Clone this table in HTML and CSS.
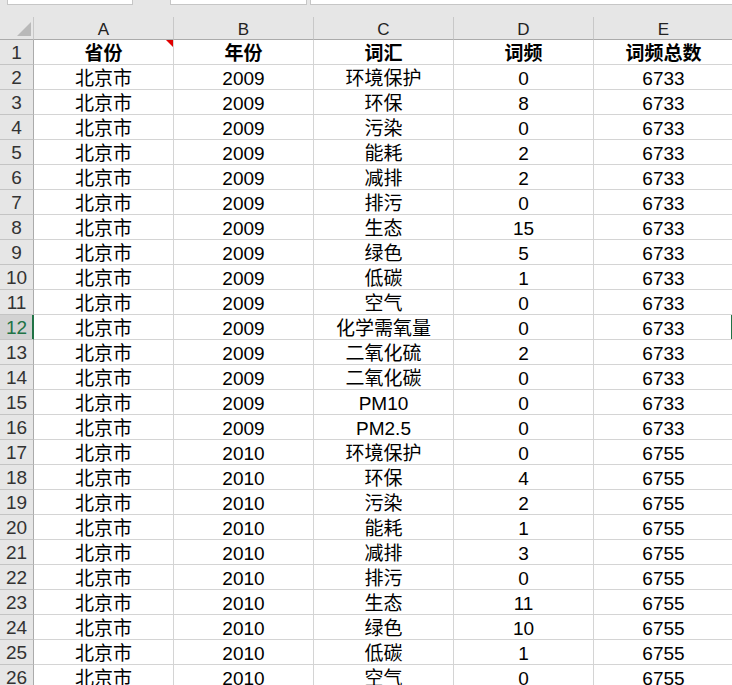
FILE: index.html
```html
<!DOCTYPE html>
<html>
<head>
<meta charset="utf-8">
<link rel="stylesheet" href="styles.css">
</head>
<body>
<div class="topbar">
  <div class="box box1"></div>
  <div class="box box2"></div>
  <div class="box box3"></div>
</div>
<div class="sheet" id="sheet">
  <div class="corner"><span class="tri"></span></div>
  <div class="colh">A</div>
  <div class="colh">B</div>
  <div class="colh">C</div>
  <div class="colh">D</div>
  <div class="colh">E</div>

  <div class="rowh">1</div>
  <div class="cell bold comment">省份</div>
  <div class="cell bold">年份</div>
  <div class="cell bold">词汇</div>
  <div class="cell bold">词频</div>
  <div class="cell bold">词频总数</div>

  <div class="rowh">2</div><div class="cell">北京市</div><div class="cell">2009</div><div class="cell">环境保护</div><div class="cell">0</div><div class="cell">6733</div>
  <div class="rowh">3</div><div class="cell">北京市</div><div class="cell">2009</div><div class="cell">环保</div><div class="cell">8</div><div class="cell">6733</div>
  <div class="rowh">4</div><div class="cell">北京市</div><div class="cell">2009</div><div class="cell">污染</div><div class="cell">0</div><div class="cell">6733</div>
  <div class="rowh">5</div><div class="cell">北京市</div><div class="cell">2009</div><div class="cell">能耗</div><div class="cell">2</div><div class="cell">6733</div>
  <div class="rowh">6</div><div class="cell">北京市</div><div class="cell">2009</div><div class="cell">减排</div><div class="cell">2</div><div class="cell">6733</div>
  <div class="rowh">7</div><div class="cell">北京市</div><div class="cell">2009</div><div class="cell">排污</div><div class="cell">0</div><div class="cell">6733</div>
  <div class="rowh">8</div><div class="cell">北京市</div><div class="cell">2009</div><div class="cell">生态</div><div class="cell">15</div><div class="cell">6733</div>
  <div class="rowh">9</div><div class="cell">北京市</div><div class="cell">2009</div><div class="cell">绿色</div><div class="cell">5</div><div class="cell">6733</div>
  <div class="rowh">10</div><div class="cell">北京市</div><div class="cell">2009</div><div class="cell">低碳</div><div class="cell">1</div><div class="cell">6733</div>
  <div class="rowh">11</div><div class="cell">北京市</div><div class="cell">2009</div><div class="cell">空气</div><div class="cell">0</div><div class="cell">6733</div>
  <div class="rowh sel">12</div><div class="cell">北京市</div><div class="cell">2009</div><div class="cell">化学需氧量</div><div class="cell">0</div><div class="cell active-edge">6733</div>
  <div class="rowh">13</div><div class="cell">北京市</div><div class="cell">2009</div><div class="cell">二氧化硫</div><div class="cell">2</div><div class="cell">6733</div>
  <div class="rowh">14</div><div class="cell">北京市</div><div class="cell">2009</div><div class="cell">二氧化碳</div><div class="cell">0</div><div class="cell">6733</div>
  <div class="rowh">15</div><div class="cell">北京市</div><div class="cell">2009</div><div class="cell">PM10</div><div class="cell">0</div><div class="cell">6733</div>
  <div class="rowh">16</div><div class="cell">北京市</div><div class="cell">2009</div><div class="cell">PM2.5</div><div class="cell">0</div><div class="cell">6733</div>
  <div class="rowh">17</div><div class="cell">北京市</div><div class="cell">2010</div><div class="cell">环境保护</div><div class="cell">0</div><div class="cell">6755</div>
  <div class="rowh">18</div><div class="cell">北京市</div><div class="cell">2010</div><div class="cell">环保</div><div class="cell">4</div><div class="cell">6755</div>
  <div class="rowh">19</div><div class="cell">北京市</div><div class="cell">2010</div><div class="cell">污染</div><div class="cell">2</div><div class="cell">6755</div>
  <div class="rowh">20</div><div class="cell">北京市</div><div class="cell">2010</div><div class="cell">能耗</div><div class="cell">1</div><div class="cell">6755</div>
  <div class="rowh">21</div><div class="cell">北京市</div><div class="cell">2010</div><div class="cell">减排</div><div class="cell">3</div><div class="cell">6755</div>
  <div class="rowh">22</div><div class="cell">北京市</div><div class="cell">2010</div><div class="cell">排污</div><div class="cell">0</div><div class="cell">6755</div>
  <div class="rowh">23</div><div class="cell">北京市</div><div class="cell">2010</div><div class="cell">生态</div><div class="cell">11</div><div class="cell">6755</div>
  <div class="rowh">24</div><div class="cell">北京市</div><div class="cell">2010</div><div class="cell">绿色</div><div class="cell">10</div><div class="cell">6755</div>
  <div class="rowh">25</div><div class="cell">北京市</div><div class="cell">2010</div><div class="cell">低碳</div><div class="cell">1</div><div class="cell">6755</div>
  <div class="rowh">26</div><div class="cell">北京市</div><div class="cell">2010</div><div class="cell">空气</div><div class="cell">0</div><div class="cell">6755</div>
</div>
</body>
</html>
```

FILE: styles.css
```css
html, body {
  margin: 0;
  padding: 0;
  background: #ffffff;
  overflow: hidden;
  width: 732px;
  height: 685px;
}

body {
  font-family: "Liberation Sans", "Noto Sans CJK SC", sans-serif;
  color: #000;
}

.topbar {
  height: 17px;
  background: #e6e6e6;
  display: flex;
  align-items: flex-end;
  overflow: hidden;
  position: relative;
}

.box {
  height: 30px;
  background: #ffffff;
  border: 1px solid #c6c6c6;
  box-sizing: border-box;
  align-self: flex-start;
  margin-top: -25px;
  flex: none;
}

.box1 { margin-left: 7px; width: 126px; }
.box2 { margin-left: 37px; width: 137px; }
.box3 { margin-left: 3px; width: 460px; }

.sheet {
  display: grid;
  grid-template-columns: 34px repeat(5, 140px);
  grid-template-rows: 23px;
  grid-auto-rows: 25px;
  width: 734px;
}

.corner {
  background: #e6e6e6;
  border-right: 1px solid #c8c8c8;
  border-bottom: 1px solid #ababab;
  position: relative;
}

.tri {
  position: absolute;
  right: 2px;
  bottom: 3px;
  width: 0;
  height: 0;
  border-left: 14px solid transparent;
  border-bottom: 14px solid #b9b9b9;
}

.colh {
  background: #e6e6e6;
  border-right: 1px solid #c8c8c8;
  border-bottom: 1px solid #ababab;
  font-size: 17px;
  line-height: 18px;
  padding-top: 4px;
  text-align: center;
  color: #222;
}

.rowh {
  background: #e6e6e6;
  border-right: 1px solid #ababab;
  border-bottom: 1px solid #c4c4c4;
  font-size: 19px;
  line-height: 24px;
  text-align: center;
  color: #333;
  padding-top: 1px;
  box-sizing: border-box;
}

.rowh.sel {
  background: #d2d2d2;
  color: #217346;
  border-right: 1px solid #217346;
  box-shadow: inset -1px 0 #217346;
}

.cell {
  border-right: 1px solid #d4d4d4;
  border-bottom: 1px solid #d4d4d4;
  font-size: 19px;
  line-height: 24px;
  padding-top: 2px;
  box-sizing: border-box;
  text-align: center;
  white-space: nowrap;
  overflow: hidden;
  position: relative;
}

.cell.bold {
  font-weight: bold;
}

.comment::after {
  content: "";
  position: absolute;
  top: 0;
  right: 0;
  width: 0;
  height: 0;
  border-top: 7px solid #e00000;
  border-left: 7px solid transparent;
}

.active-edge::after {
  content: "";
  position: absolute;
  top: 0;
  bottom: -1px;
  right: 0;
  width: 2px;
  background: #217346;
}
```
